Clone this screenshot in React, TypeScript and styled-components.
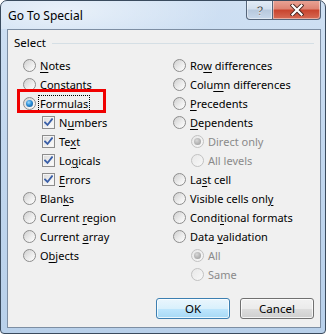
import React from 'react';
import styled, { createGlobalStyle } from 'styled-components';

const Global = createGlobalStyle`
  html, body { margin: 0; padding: 0; background: #ffffff; }
  body {
    font-family: "Noto Sans", "Liberation Sans", sans-serif;
    font-size: 11px;
    color: #000;
  }
  #root { width: 328px; height: 336px; }
`;

const Window = styled.div`
  box-sizing: border-box;
  width: 326px;
  height: 334px;
  border: 1px solid #3a4b5e;
  border-radius: 7px 7px 4px 4px;
  background: linear-gradient(to bottom, #cfe0f3 0%, #c3d8ef 40%, #b8d0ea 100%);
  padding: 0 4px 5px 6px;
  display: flex;
  flex-direction: column;
  position: relative;
  overflow: hidden;
`;

const TitleBar = styled.div`
  height: 28px;
  display: flex;
  align-items: flex-start;
  justify-content: space-between;
  background: radial-gradient(ellipse 160px 40px at 60px 10px, rgba(255,255,255,0.55), rgba(255,255,255,0) 100%);
  margin: 0 -4px 0 -6px;
  padding: 0 0 0 6px;
`;

const Title = styled.div`
  align-self: center;
  padding-left: 1px;
  font-size: 12px;
  line-height: 16px;
  color: #000;
  margin-top: 1px;
`;

const CaptionButtons = styled.div`
  display: flex;
  margin-right: 4px;
  margin-top: -1px;
`;

const CaptionButton = styled.div<{ $close?: boolean }>`
  box-sizing: border-box;
  width: ${p => (p.$close ? '48px' : '27px')};
  height: 20px;
  border: 1px solid #55657a;
  border-top: none;
  border-radius: ${p => (p.$close ? '0 0 4px 0' : '0 0 0 4px')};
  ${p => (p.$close ? 'border-left: none;' : '')}
  background: ${p =>
    p.$close
      ? 'linear-gradient(to bottom, #eaa698 0%, #df8574 45%, #c9452f 55%, #d66b55 100%)'
      : 'linear-gradient(to bottom, #e4edf7 0%, #d3e0ee 45%, #b8c9dd 55%, #c8d8ea 100%)'};
  display: flex;
  align-items: center;
  justify-content: center;
  box-shadow: inset 0 0 0 1px rgba(255,255,255,0.45);
`;

const Content = styled.div`
  flex: 1;
  border: 1px solid #7d8ea3;
  background: #f0f0f0;
  display: flex;
  flex-direction: column;
  padding: 6px 6px 8px 0;
`;

const GroupHeader = styled.div`
  display: flex;
  align-items: center;
  height: 14px;
  padding-left: 6px;
  gap: 6px;
`;

const GroupTitle = styled.span`
  line-height: 14px;
  font-size: 11.5px;
`;

const GroupLine = styled.div`
  flex: 1;
  height: 1px;
  background: #d5dfe5;
`;

const Columns = styled.div`
  display: grid;
  grid-template-columns: 150px 1fr;
  padding-left: 15px;
  margin-top: 6px;
`;

const Column = styled.div`
  display: flex;
  flex-direction: column;
`;

const Row = styled.div<{ $indent?: number; $disabled?: boolean }>`
  position: relative;
  display: flex;
  align-items: center;
  height: 19px;
  padding-left: ${p => p.$indent || 0}px;
  gap: 4px;
  color: ${p => (p.$disabled ? '#8a8a8a' : '#000')};
  white-space: nowrap;
`;

const RadioCircle = styled.span<{ $disabled?: boolean }>`
  box-sizing: border-box;
  width: 13px;
  height: 13px;
  border-radius: 50%;
  flex-shrink: 0;
  border: 1px solid ${p => (p.$disabled ? '#c2c2c2' : '#8d8d8d')};
  background: ${p =>
    p.$disabled
      ? 'linear-gradient(135deg, #e8e8e8 0%, #f8f8f8 100%)'
      : 'linear-gradient(135deg, #cfcfcf 0%, #ececec 55%, #ffffff 100%)'};
  display: flex;
  align-items: center;
  justify-content: center;
`;

const RadioDot = styled.span<{ $disabled?: boolean }>`
  width: 7px;
  height: 7px;
  border-radius: 50%;
  background: ${p =>
    p.$disabled
      ? 'radial-gradient(circle at 40% 35%, #d8d8d8 0%, #a9a9a9 70%, #8f8f8f 100%)'
      : 'radial-gradient(circle at 40% 35%, #9fdcff 0%, #2b8fd8 45%, #0d4a8a 100%)'};
`;

const CheckBox = styled.span`
  box-sizing: border-box;
  width: 13px;
  height: 13px;
  flex-shrink: 0;
  border: 1px solid #8d8d8d;
  background: linear-gradient(135deg, #d8d8d8 0%, #f0f0f0 60%, #ffffff 100%);
  box-shadow: inset 0 0 0 1px #f4f4f4;
  display: flex;
  align-items: center;
  justify-content: center;
`;

const Key = styled.span`
  text-decoration: underline;
  text-underline-offset: 2px;
  text-decoration-thickness: 1px;
`;

const FocusLabel = styled.span`
  outline: 1px dotted #000;
  margin-left: -1px;
  padding: 0 1px;
  line-height: 15px;
`;

const Highlight = styled.div`
  position: absolute;
  left: -6px;
  top: -5px;
  width: 89px;
  height: 24px;
  box-sizing: border-box;
  border: 3px solid #f00000;
  pointer-events: none;
`;

const Footer = styled.div`
  margin-top: auto;
  display: flex;
  justify-content: flex-end;
  gap: 10px;
`;

const Button = styled.button<{ $default?: boolean }>`
  box-sizing: border-box;
  width: 74px;
  height: 21px;
  font: inherit;
  font-size: 11.5px;
  color: #000;
  border-radius: 3px;
  border: 1px solid ${p => (p.$default ? '#3c7fb1' : '#707070')};
  background: ${p =>
    p.$default
      ? 'linear-gradient(to bottom, #eaf6fd 0%, #d9f0fc 50%, #bee6fd 51%, #a7d9f5 100%)'
      : 'linear-gradient(to bottom, #f2f2f2 0%, #ebebeb 50%, #dddddd 51%, #cfcfcf 100%)'};
  box-shadow: inset 0 0 0 1px rgba(255,255,255,0.75);
  padding: 0;
  line-height: 17px;
`;

type Item = {
  kind: 'radio' | 'check';
  label: string;
  checked?: boolean;
  disabled?: boolean;
  sub?: boolean;
  focus?: boolean;
  highlight?: boolean;
};

const leftItems: Item[] = [
  { kind: 'radio', label: '&Notes' },
  { kind: 'radio', label: 'C&onstants' },
  { kind: 'radio', label: '&Formulas', checked: true, focus: true, highlight: true },
  { kind: 'check', label: 'N&umbers', checked: true, sub: true },
  { kind: 'check', label: 'Te&xt', checked: true, sub: true },
  { kind: 'check', label: 'Lo&gicals', checked: true, sub: true },
  { kind: 'check', label: '&Errors', checked: true, sub: true },
  { kind: 'radio', label: 'Blan&ks' },
  { kind: 'radio', label: 'Current &region' },
  { kind: 'radio', label: 'Current &array' },
  { kind: 'radio', label: 'O&bjects' },
];

const rightItems: Item[] = [
  { kind: 'radio', label: 'Ro&w differences' },
  { kind: 'radio', label: 'Colu&mn differences' },
  { kind: 'radio', label: '&Precedents' },
  { kind: 'radio', label: '&Dependents' },
  { kind: 'radio', label: 'Direct only', sub: true, checked: true, disabled: true },
  { kind: 'radio', label: 'All levels', sub: true, disabled: true },
  { kind: 'radio', label: 'La&st cell' },
  { kind: 'radio', label: 'Visible cells onl&y' },
  { kind: 'radio', label: 'Condi&tional formats' },
  { kind: 'radio', label: 'Data &validation' },
  { kind: 'radio', label: 'All', sub: true, checked: true, disabled: true },
  { kind: 'radio', label: 'Same', sub: true, disabled: true },
];

function Label({ text }: { text: string }) {
  const i = text.indexOf('&');
  if (i < 0) return <>{text}</>;
  return (
    <>
      {text.slice(0, i)}
      <Key>{text[i + 1]}</Key>
      {text.slice(i + 2)}
    </>
  );
}

function CheckMark() {
  return (
    <svg width="9" height="9" viewBox="0 0 9 9">
      <path d="M1 4.5 L3.5 7 L8 1.2" fill="none" stroke="#3a5fa8" strokeWidth="1.8" strokeLinecap="square" />
    </svg>
  );
}

function Option({ item, indent }: { item: Item; indent: number }) {
  const text = item.focus ? (
    <FocusLabel>
      <Label text={item.label} />
    </FocusLabel>
  ) : (
    <span>
      <Label text={item.label} />
    </span>
  );
  return (
    <Row $indent={item.sub ? indent : 0} $disabled={item.disabled}>
      {item.kind === 'radio' ? (
        <RadioCircle $disabled={item.disabled}>
          {item.checked && <RadioDot $disabled={item.disabled} />}
        </RadioCircle>
      ) : (
        <CheckBox>{item.checked && <CheckMark />}</CheckBox>
      )}
      {text}
      {item.highlight && <Highlight />}
    </Row>
  );
}

function HelpGlyph() {
  return (
    <svg width="10" height="12" viewBox="0 0 10 12">
      <text x="5" y="10.5" textAnchor="middle" fontFamily="Liberation Sans, sans-serif" fontWeight="bold" fontSize="12" fill="#2b3540" stroke="#ffffff" strokeWidth="0.4">?</text>
    </svg>
  );
}

function CloseGlyph() {
  return (
    <svg width="14" height="12" viewBox="0 0 14 12">
      <path d="M2.5 1.5 L11.5 10.5 M11.5 1.5 L2.5 10.5" stroke="#4a2620" strokeWidth="4" strokeLinecap="square" />
      <path d="M2.5 1.5 L11.5 10.5 M11.5 1.5 L2.5 10.5" stroke="#ffffff" strokeWidth="2.2" strokeLinecap="square" />
    </svg>
  );
}

export default function App() {
  return (
    <>
      <Global />
      <Window>
        <TitleBar>
          <Title>Go To Special</Title>
          <CaptionButtons>
            <CaptionButton>
              <HelpGlyph />
            </CaptionButton>
            <CaptionButton $close>
              <CloseGlyph />
            </CaptionButton>
          </CaptionButtons>
        </TitleBar>
        <Content>
          <GroupHeader>
            <GroupTitle>Select</GroupTitle>
            <GroupLine />
          </GroupHeader>
          <Columns>
            <Column>
              {leftItems.map(it => (
                <Option key={it.label} item={it} indent={19} />
              ))}
            </Column>
            <Column>
              {rightItems.map(it => (
                <Option key={it.label} item={it} indent={18} />
              ))}
            </Column>
          </Columns>
          <Footer>
            <Button $default>OK</Button>
            <Button>Cancel</Button>
          </Footer>
        </Content>
      </Window>
    </>
  );
}
